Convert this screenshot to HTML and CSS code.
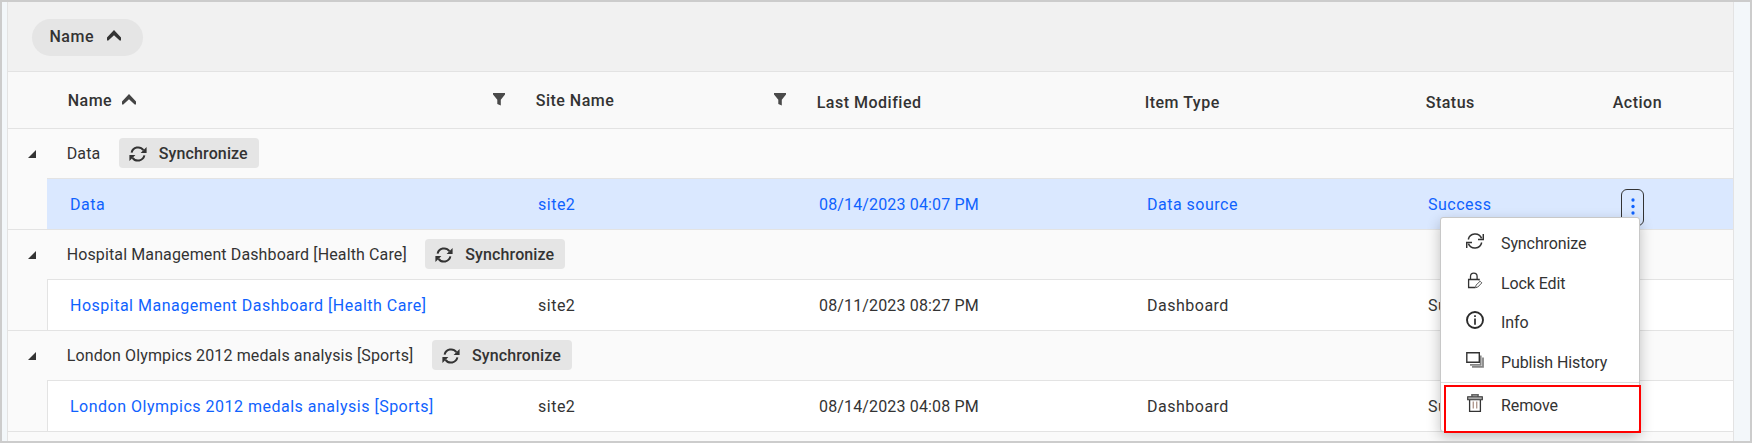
FILE: index.html
```
<!DOCTYPE html>
<html lang="en">
<head>
<meta charset="utf-8">
<title>Items</title>
<link rel="stylesheet" href="styles.css">
</head>
<body>
<svg class="symbols" width="0" height="0">
  <symbol id="sync" viewBox="0 0 18 16">
    <path d="M2.300 6.500A7 7 0 0 1 15.600 5.400M15.700 9.500A7 7 0 0 1 2.400 10.600" fill="none" stroke="currentColor"/>
    <path d="M17.300 1v5.400h-5.300M.7 15v-5.400h5.300" fill="none" stroke="currentColor"/>
  </symbol>
  <symbol id="syncbold" viewBox="0 0 18 16">
    <path d="M2.600 6.600A6.600 6.600 0 0 1 14.400 4.200M15.400 9.400A6.600 6.600 0 0 1 3.600 11.800" fill="none" stroke="currentColor" stroke-width="2"/>
    <path d="M17.600 .9v6h-6zM.4 15.100v-6h6z" fill="currentColor"/>
  </symbol>
  <symbol id="chevron" viewBox="0 0 14 11">
    <path d="M7 0L14 7.500v3h-1.300L7 5.200 1.300 10.500H0V7.500z" fill="currentColor"/>
  </symbol>
  <symbol id="funnel" viewBox="0 0 12 13">
    <path d="M0 0h12v1.600L7.800 6.800V12.500L4.300 11V6.800L0 1.600z" fill="currentColor"/>
  </symbol>
</svg>
<div class="frame">
  <div class="grid">
    <div class="group-area">
      <div class="chip">Name<svg class="chevron"><use href="#chevron"/></svg></div>
    </div>
    <div class="row head">
      <div class="cell sortable"><span>Name</span><svg class="chevron"><use href="#chevron"/></svg><svg class="funnel"><use href="#funnel"/></svg></div>
      <div class="cell sortable"><span>Site Name</span><svg class="funnel"><use href="#funnel"/></svg></div>
      <div class="cell">Last Modified</div>
      <div class="cell">Item Type</div>
      <div class="cell">Status</div>
      <div class="cell">Action</div>
    </div>

    <div class="caption"><i class="expander"></i><span>Data</span><button class="sync"><svg><use href="#syncbold"/></svg>Synchronize</button></div>
    <div class="record">
      <div class="row selected">
        <div class="cell link">Data</div><div class="cell">site2</div><div class="cell date">08/14/2023 04:07 PM</div><div class="cell">Data source</div><div class="cell">Success</div>
        <div class="cell action"><button class="more"><svg viewBox="0 0 4 18"><circle cx="2" cy="2" r="1.650"/><circle cx="2" cy="8.500" r="1.650"/><circle cx="2" cy="15" r="1.650"/></svg></button></div>
      </div>
    </div>

    <div class="caption"><i class="expander"></i><span>Hospital Management Dashboard [Health Care]</span><button class="sync"><svg><use href="#syncbold"/></svg>Synchronize</button></div>
    <div class="record">
      <div class="row">
        <div class="cell link">Hospital Management Dashboard [Health Care]</div><div class="cell">site2</div><div class="cell date">08/11/2023 08:27 PM</div><div class="cell">Dashboard</div><div class="cell">Success</div><div class="cell"></div>
      </div>
    </div>

    <div class="caption"><i class="expander"></i><span>London Olympics 2012 medals analysis [Sports]</span><button class="sync"><svg><use href="#syncbold"/></svg>Synchronize</button></div>
    <div class="record">
      <div class="row">
        <div class="cell link">London Olympics 2012 medals analysis [Sports]</div><div class="cell">site2</div><div class="cell date">08/14/2023 04:08 PM</div><div class="cell">Dashboard</div><div class="cell">Success</div><div class="cell"></div>
      </div>
    </div>
  </div>

  <div class="menu">
    <div class="item"><svg viewBox="0 0 18 16"><use href="#sync" stroke-width="1.5"/></svg><span>Synchronize</span></div>
    <div class="item"><svg viewBox="0 0 18 18"><path d="M9 15.500H2.600V7.500h10.500v1M4.500 7.500V4.500a3.300 3.300 0 0 1 6.600 0v3" fill="none" stroke="#333" stroke-width="1.300"/><path d="M9.500 15.800l.5-2.600 4.100-4 1.700 1.700-4 4.100z" fill="none" stroke="#555"/></svg><span>Lock Edit</span></div>
    <div class="item"><svg viewBox="0 0 18 18"><circle cx="9" cy="9" r="8" fill="none" stroke="#2b2b2b" stroke-width="1.900"/><path d="M9 7.500v6.200M9 4.200v1.900" stroke="#2b2b2b" stroke-width="1.700"/></svg><span>Info</span></div>
    <div class="item"><svg viewBox="0 0 18 18"><path d="M14.700 4.500v9.300H4M17 6.500v9.300H6" fill="none" stroke="#858585" stroke-width="1.800"/><path d="M.8 1.700h12.500v9.500H.8z" fill="#fff" stroke="#333" stroke-width="1.400"/></svg><span>Publish History</span></div>
    <div class="item remove"><svg viewBox="0 0 18 18"><path d="M6 2.500V.9h6v1.600" fill="none" stroke="#666" stroke-width="1.700"/><path d="M1.700 2.800h14.600v3H1.700z" fill="#aaa" stroke="#333" stroke-width="1.100"/><path d="M3.600 6v11.300h10.800V6" fill="none" stroke="#333" stroke-width="1.300"/><path d="M7.300 7.500v7M10.700 7.500v7" stroke="#b09a90" stroke-width="1.400"/></svg><span>Remove</span></div>
    <div class="highlight"></div>
  </div>
</div>
</body>
</html>
```
FILE: styles.css
```
* { box-sizing: border-box; }
body { margin: 0; font-family: Roboto, "Liberation Sans", sans-serif; font-size: 16px; color: #333; }
button { font: inherit; color: inherit; border: 0; padding: 0; }
svg { display: block; flex: none; }
.symbols { position: absolute; }
.frame { position: relative; height: 443px; border: 2px solid #ccc; background: #f3f7fa; padding: 0 16px 0 5px; overflow: hidden; }
.grid { height: 443px; background: #fafafa; border: 1px solid #e3e3e3; border-width: 0 1px; }
.group-area { height: 70px; background: #f1f1f1; border-bottom: 1px solid #e3e3e3; padding: 17px 24px; }
.chip { width: 111px; height: 37px; border-radius: 19px; background: #e5e5e5; display: flex; align-items: center; gap: 13px; padding: 0 0 2px 17.500px; font-weight: 500; letter-spacing: .5px; }
.chevron { width: 14px; height: 11px; margin-top: -2px; color: #333; }
.row { display: grid; grid-template-columns: 468px 281px 328px 281px 187px 1fr; height: 50px; align-items: center; letter-spacing: .5px; }
.cell { white-space: nowrap; }
.record { height: 51px; padding-left: 39px; border-bottom: 1px solid #e3e3e3; }
.record .row { border-left: 1px solid #e3e3e3; background: #fff; padding-left: 22px; }
.record .row.selected { background: #dae8ff; color: #0f62fe; border-left-color: #dae8ff; }
.record .link { color: #0f62fe; }
.record .date { letter-spacing: .15px; }
.head { height: 57px; padding: 4px 0 0 59.700px; border-bottom: 1px solid #e3e3e3; font-weight: 500; background: #f9f9f9; }
.head .sortable { display: flex; align-items: center; margin-top: -4px; }
.head .chevron { color: #444; margin-left: 9.500px; }
.funnel { width: 12px; height: 13px; margin: -1px 31px 0 auto; color: #4a4a4a; }
.caption { height: 50px; display: flex; align-items: center; letter-spacing: .12px; padding-left: 20px; background: linear-gradient(#e3e3e3, #e3e3e3) 39px 100% / 100% 1px no-repeat; }
.caption > span { margin-top: -1px; }
.expander { width: 8px; height: 8px; margin-right: 30.700px; background: #333; clip-path: polygon(100% 0, 100% 100%, 0 100%); }
.sync { display: flex; align-items: center; gap: 12px; width: 140px; height: 30px; margin: -2px 0 0 18.500px; padding: 1px 0 0 10px; background: #e5e5e5; border-radius: 4px; font-weight: 500; letter-spacing: .12px; }
.sync svg { width: 18px; height: 16px; }
.action { align-self: start; padding: 10px 0 0 6px; }
.more { width: 23px; height: 37px; border: 1px solid #333; border-radius: 6px; background: none; display: flex; justify-content: center; padding-top: 8px; }
.more svg { width: 4px; height: 18px; fill: #0f62fe; }
.menu { position: absolute; left: 1438px; top: 215px; width: 200px; height: 215px; background: #fff; border: 1px solid #c8c8c8; border-radius: 3px; box-shadow: 0 5px 14px rgba(0,0,0,.24); padding-top: 6px; letter-spacing: -.1px; }
.item { height: 39.500px; display: flex; align-items: center; padding-left: 25px; gap: 17px; }
.item svg { width: 18px; height: 18px; margin-top: -5px; }
.item.remove { border-top: 1px solid #ddd; height: 46px; }
.highlight { position: absolute; left: 3px; top: 167px; width: 197px; height: 48px; border: 2px solid #f00; }
```
